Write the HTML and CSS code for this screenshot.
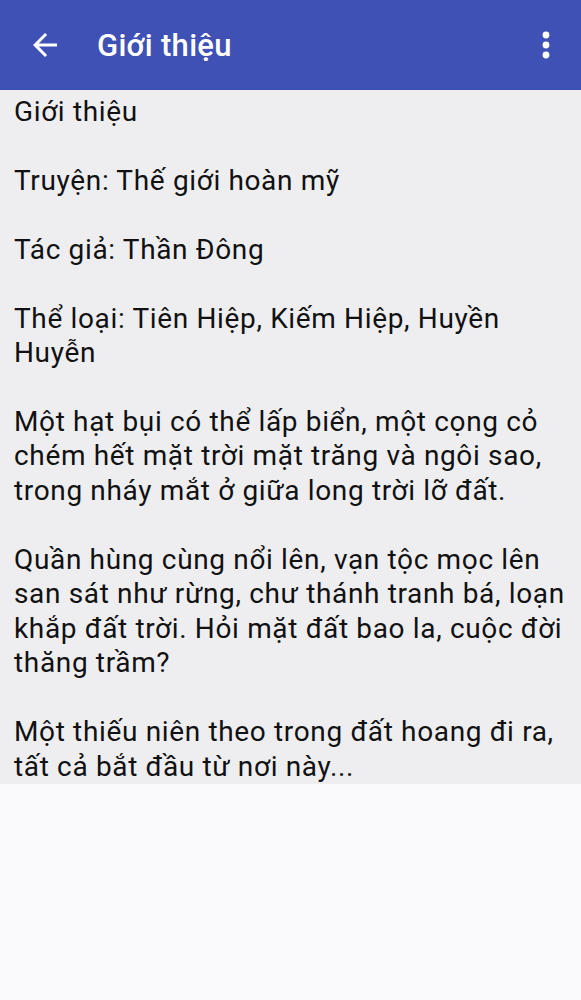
FILE: index.html
```html
<!DOCTYPE html>
<html lang="vi">
<head>
<meta charset="utf-8">
<title>Giới thiệu</title>
<link rel="stylesheet" href="styles.css">
</head>
<body>
<header class="appbar">
  <button class="icon-btn back" aria-label="Back">
    <svg width="36" height="36" viewBox="0 0 24 24"><path d="M20 11H7.83l5.59-5.59L12 4l-8 8 8 8 1.41-1.41L7.83 13H20v-2z" fill="#fff"/></svg>
  </button>
  <h1 class="title">Giới thiệu</h1>
  <button class="icon-btn more" aria-label="More">
    <svg width="12" height="32" viewBox="0 0 12 32"><circle cx="6" cy="6" r="3.4" fill="#fff"/><circle cx="6" cy="16" r="3.4" fill="#fff"/><circle cx="6" cy="26" r="3.4" fill="#fff"/></svg>
  </button>
</header>
<main class="content">
  <p>Giới thiệu</p>
  <p>Truyện: Thế giới hoàn mỹ</p>
  <p>Tác giả: Thần Đông</p>
  <p>Thể loại: Tiên Hiệp, Kiếm Hiệp, Huyền Huyễn</p>
  <p>Một hạt bụi có thể lấp biển, một cọng cỏ chém hết mặt trời mặt trăng và ngôi sao, trong nháy mắt ở giữa long trời lỡ đất.</p>
  <p>Quần hùng cùng nổi lên, vạn tộc mọc lên san sát như rừng, chư thánh tranh bá, loạn khắp đất trời. Hỏi mặt đất bao la, cuộc đời thăng trầm?</p>
  <p>Một thiếu niên theo trong đất hoang đi ra, tất cả bắt đầu từ nơi này...</p>
</main>
</body>
</html>
```

FILE: styles.css
```css
html, body {
  margin: 0;
  padding: 0;
  background: #fafafc;
  font-family: Roboto, "Noto Sans", sans-serif;
}
.appbar {
  height: 90px;
  background: #3f51b5;
  display: flex;
  align-items: center;
  padding: 0 29px 0 27px;
  box-sizing: border-box;
}
.icon-btn {
  background: none;
  border: 0;
  padding: 0;
  display: flex;
  align-items: center;
  justify-content: center;
}
.back {
  width: 36px;
  height: 48px;
}
.more {
  width: 12px;
  height: 48px;
}
.title {
  flex: 1;
  margin: 0 0 0 34px;
  color: #fff;
  font-size: 31px;
  font-weight: 500;
  letter-spacing: 0.3px;
}
.content {
  background: #eeeef1;
  padding: 5px 9px 0 14px;
  color: #111;
  font-size: 28px;
  letter-spacing: 0.65px;
  line-height: 34.45px;
}
.content p {
  margin: 0 0 34.45px 0;
}
.content p:last-child {
  margin-bottom: 0;
}
```
